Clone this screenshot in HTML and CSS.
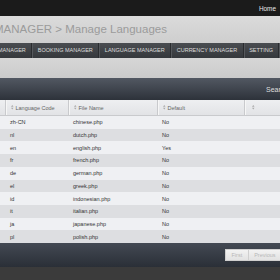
FILE: index.html
```html
<!DOCTYPE html>
<html>
<head>
<meta charset="utf-8">
<link rel="stylesheet" href="styles.css">
</head>
<body>
<div class="topbar"><span class="home">Home</span></div>
<div class="titlebar">MANAGER &gt; Manage Languages</div>
<div class="nav">
  <span class="nav-item">MANAGER</span>
  <span class="nav-item">BOOKING MANAGER</span>
  <span class="nav-item">LANGUAGE MANAGER</span>
  <span class="nav-item">CURRENCY MANAGER</span>
  <span class="nav-item">SETTING</span>
</div>
<div class="gap"></div>
<div class="tablehead"><span class="search">Search:</span></div>
<div class="grid">
  <div class="th first"></div>
  <div class="th"><svg class="sort" viewBox="0 0 4 7"><path d="M2 0L4 2.6H0Z M2 7L4 4.4H0Z"/></svg>Language Code</div>
  <div class="th"><svg class="sort" viewBox="0 0 4 7"><path d="M2 0L4 2.6H0Z M2 7L4 4.4H0Z"/></svg>File Name</div>
  <div class="th"><svg class="sort" viewBox="0 0 4 7"><path d="M2 0L4 2.6H0Z M2 7L4 4.4H0Z"/></svg>Default</div>
  <div class="th last"><svg class="sort" viewBox="0 0 4 7"><path d="M2 0L4 2.6H0Z M2 7L4 4.4H0Z"/></svg></div>
</div>
<div class="rows">
  <div class="row"><span></span><span>zh-CN</span><span>chinese.php</span><span>No</span><span></span></div>
  <div class="row alt"><span></span><span>nl</span><span>dutch.php</span><span>No</span><span></span></div>
  <div class="row"><span></span><span>en</span><span>english.php</span><span>Yes</span><span></span></div>
  <div class="row alt"><span></span><span>fr</span><span>french.php</span><span>No</span><span></span></div>
  <div class="row"><span></span><span>de</span><span>german.php</span><span>No</span><span></span></div>
  <div class="row alt"><span></span><span>el</span><span>greek.php</span><span>No</span><span></span></div>
  <div class="row"><span></span><span>id</span><span>indonesian.php</span><span>No</span><span></span></div>
  <div class="row alt"><span></span><span>it</span><span>italian.php</span><span>No</span><span></span></div>
  <div class="row"><span></span><span>ja</span><span>japanese.php</span><span>No</span><span></span></div>
  <div class="row alt"><span></span><span>pl</span><span>polish.php</span><span>No</span><span></span></div>
</div>
<div class="tablefoot">
  <span class="pbtn">First</span><span class="pbtn">Previous</span><span class="pbtn">Next</span>
</div>
</body>
</html>
```
FILE: styles.css
```css
html, body {
  margin: 0;
  padding: 0;
}
body {
  width: 280px;
  height: 280px;
  overflow: hidden;
  background: #3b3b3b;
  font-family: "Liberation Sans", Arial, sans-serif;
}
.topbar {
  height: 16px;
  background: #1b1b1b;
  display: flex;
  justify-content: flex-end;
  align-items: center;
  padding-right: 4px;
}
.home {
  color: #e8e8e8;
  font-size: 6.4px;
}
.titlebar {
  height: 27px;
  box-sizing: border-box;
  padding-top: 6.5px;
  line-height: 13px;
  background: linear-gradient(#dbdbdb, #cecece);
  color: #9b9b9b;
  font-size: 11.5px;
  text-indent: -6px;
  white-space: nowrap;
}
.nav {
  height: 15px;
  display: flex;
  margin-left: -7.5px;
  background: linear-gradient(#4a4d51, #35383c);
  white-space: nowrap;
}
.nav-item {
  padding: 0 5.5px;
  line-height: 15px;
  font-size: 5.5px;
  color: #dcdcdc;
  border-right: 1px solid #2a2c2f;
  box-shadow: 1px 0 0 #55585c;
}
.gap {
  height: 20px;
  background: linear-gradient(#d6d6d6, #cbcbcb);
}
.tablehead {
  height: 22px;
  background: linear-gradient(#525862, #2d323a);
  display: flex;
  align-items: center;
  padding-left: 266px;
  white-space: nowrap;
}
.search {
  color: #dedede;
  font-size: 7px;
}
.grid, .row {
  display: grid;
  grid-template-columns: 5px 63px 89px 87px 60px;
}
.grid {
  height: 16px;
  background: linear-gradient(#eeeff1, #e2e3e6);
  border-bottom: 1px solid #c9cacd;
  box-sizing: border-box;
}
.th {
  display: flex;
  align-items: center;
  padding-left: 5px;
  font-size: 5.5px;
  color: #666;
  border-left: 1px solid #c9cacd;
  box-shadow: inset 1px 0 0 #f6f6f6;
  white-space: nowrap;
}
.th.first {
  border-left: none;
  box-shadow: none;
  padding: 0;
}
.sort {
  width: 2.5px;
  height: 4.5px;
  fill: #a8a8a8;
  margin-right: 2px;
}
.th.last .sort {
  margin-left: 2px;
}
.rows {
  height: 127px;
  display: flex;
  flex-direction: column;
}
.row {
  flex: 1;
  align-items: center;
  background: #eff0f3;
  font-size: 5.5px;
  color: #333;
}
.row.alt {
  background: #dddee1;
}
.row span {
  padding-left: 5px;
  white-space: nowrap;
}
.row span:first-child {
  padding: 0;
}
.tablefoot {
  height: 24px;
  background: linear-gradient(#434953, #2a2f37);
  display: flex;
  align-items: center;
  padding-left: 225px;
  white-space: nowrap;
}
.pbtn {
  height: 12px;
  box-sizing: border-box;
  display: flex;
  align-items: center;
  padding: 0 5.5px;
  font-size: 5.5px;
  color: #b8b8b8;
  background: linear-gradient(#f2f2f2, #e2e2e2);
  border: 1px solid #cfcfcf;
  border-left: none;
}
.pbtn:first-child {
  border-left: 1px solid #cfcfcf;
}
```
